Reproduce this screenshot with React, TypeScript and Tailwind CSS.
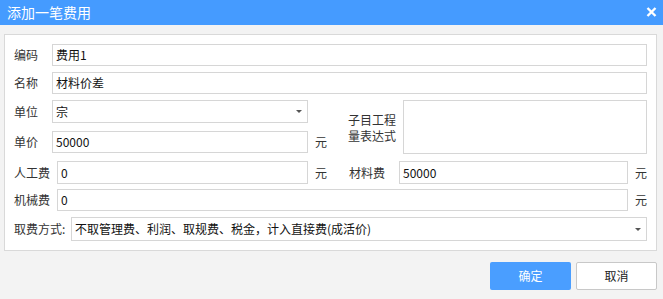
import { ReactNode } from "react";

const font = {
  fontFamily: '"Noto Sans CJK SC", "Noto Sans", sans-serif',
};

function Field({ value, className = "" }: { value: string; className?: string }) {
  return (
    <div
      className={`flex h-[22px] items-center border border-[#d6d6d6] bg-white pl-[3px] text-[12px] text-[#111] ${className}`}
    >
      {value}
    </div>
  );
}

function Select({ value, className = "" }: { value: string; className?: string }) {
  return (
    <div
      className={`flex items-center justify-between border border-[#d6d6d6] bg-white pl-[3px] pr-[5px] text-[12px] text-[#111] ${className}`}
    >
      <span>{value}</span>
      <span className="h-0 w-0 border-x-[3px] border-t-[3px] border-x-transparent border-t-[#555]" />
    </div>
  );
}

function Label({ children, className = "" }: { children: ReactNode; className?: string }) {
  return <span className={`shrink-0 text-[12px] text-[#333] ${className}`}>{children}</span>;
}

function Unit() {
  return <span className="ml-[7px] text-[12px] text-[#333]">元</span>;
}

export default function App() {
  return (
    <div className="flex h-[299px] w-[663px] flex-col bg-[#f3f3f3]" style={font}>
      {/* Title bar */}
      <div className="flex h-[25px] shrink-0 items-center justify-between bg-[#459bff] pl-[7px] pr-[6px]">
        <span className="text-[14px] text-white">添加一笔费用</span>
        <svg width="11" height="10" viewBox="0 0 11 10" className="mb-[2px]">
          <path d="M1.5 1 L9.5 9 M9.5 1 L1.5 9" stroke="#fff" strokeWidth="2.4" />
        </svg>
      </div>

      {/* Form panel */}
      <div className="ml-[4px] mr-[6px] mt-[9px] border border-[#d9d9d9] bg-white pb-[9px] pl-[9px] pr-[9px] pt-[9px]">
        <div className="flex items-center">
          <Label className="w-[38px]">编码</Label>
          <Field value="费用1" className="flex-1" />
        </div>

        <div className="mt-[6px] flex items-center">
          <Label className="w-[38px]">名称</Label>
          <Field value="材料价差" className="flex-1" />
        </div>

        <div className="mt-[6px] flex">
          <div className="flex w-[313px] flex-col">
            <div className="flex items-center">
              <Label className="w-[38px]">单位</Label>
              <Select value="宗" className="h-[23px] w-[256px]" />
            </div>
            <div className="mt-[8px] flex items-center">
              <Label className="w-[38px]">单价</Label>
              <Field value="50000" className="w-[256px]" />
              <Unit />
            </div>
          </div>
          <div className="ml-[21px] flex flex-1 items-center">
            <Label className="mt-[2px] w-[55px] leading-[16px]">
              子目工程
              <br />
              量表达式
            </Label>
            <div className="h-[54px] flex-1 border border-[#d6d6d6] bg-white" />
          </div>
        </div>

        <div className="mt-[7px] flex items-center">
          <Label className="w-[43px]">人工费</Label>
          <Field value="0" className="h-[23px] w-[251px]" />
          <Unit />
          <Label className="ml-[22px] w-[50px]">材料费</Label>
          <Field value="50000" className="h-[23px] flex-1" />
          <Unit />
        </div>

        <div className="mt-[5px] flex items-center">
          <Label className="w-[43px]">机械费</Label>
          <Field value="0" className="flex-1" />
          <Unit />
        </div>

        <div className="mt-[6px] flex items-center">
          <Label className="w-[57px]">取费方式:</Label>
          <Select
            value="不取管理费、利润、取规费、税金，计入直接费(成活价)"
            className="h-[24px] flex-1"
          />
        </div>
      </div>

      {/* Footer buttons */}
      <div className="mr-[6px] mt-[11px] flex justify-end gap-[5px]">
        <button className="h-[28px] w-[81px] rounded-[2px] bg-[#4a9eff] text-[12px] text-white">
          确定
        </button>
        <button className="h-[28px] w-[81px] rounded-[2px] border border-[#c8c8c8] bg-white text-[12px] text-[#222]">
          取消
        </button>
      </div>
    </div>
  );
}
